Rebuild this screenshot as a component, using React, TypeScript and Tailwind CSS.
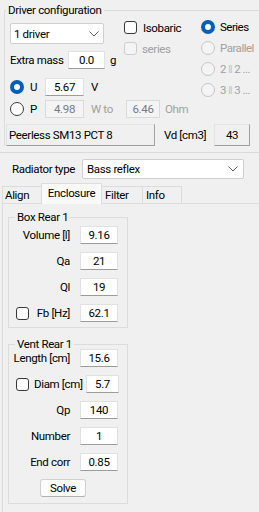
import React from "react"

function Chevron() {
    return (
        <svg width="10" height="6" viewBox="0 0 10 6" className="shrink-0">
            <polyline points="0.5,0.5 5,5 9.5,0.5" fill="none" stroke="#606060" strokeWidth="1" />
        </svg>
    )
}

function Radio({ checked = false, disabled = false }: { checked?: boolean; disabled?: boolean }) {
    if (checked) {
        return (
            <span className="w-[14px] h-[14px] rounded-full bg-[#005fb8] flex items-center justify-center shrink-0">
                <span className="w-[6px] h-[6px] rounded-full bg-white" />
            </span>
        )
    }
    return (
        <span
            className={`w-[14px] h-[14px] rounded-full border shrink-0 ${disabled ? "border-[#c6c6c6] bg-[#f4f4f4]" : "border-[#3a3a3a] bg-white"}`}
        />
    )
}

function Check({ disabled = false }: { disabled?: boolean }) {
    return (
        <span
            className={`w-[13px] h-[13px] rounded-[3px] border shrink-0 ${disabled ? "border-[#cdcdcd] bg-[#f4f4f4]" : "border-[#3a3a3a] bg-white"}`}
        />
    )
}

function Box({ value, w, disabled = false }: { value: string; w: string; disabled?: boolean }) {
    return (
        <div
            className={`${w} h-[18px] flex items-center justify-center border shrink-0 ${disabled
                ? "bg-[#f4f4f4] border-[#dadada] text-[#7a7a7a]"
                : "bg-white border-[#e1e1e1] border-b-[#9c9c9c]"
                }`}
        >
            {value}
        </div>
    )
}

function Row({ label, value, check = false }: { label: string; value: string; check?: boolean }) {
    return (
        <div className="h-[18px] flex items-center">
            <div className="w-[61px] shrink-0 flex items-center">
                {check && (
                    <span className="ml-[7px] flex">
                        <Check />
                    </span>
                )}
                <span className="ml-auto">{label}</span>
            </div>
            <div className="ml-[10px]">
                <Box value={value} w="w-[38px]" />
            </div>
        </div>
    )
}

export default function App() {
    return (
        <div className="w-[259px] h-[512px] overflow-hidden whitespace-nowrap bg-[#f0f0f0] text-[11.5px] tracking-[-0.35px] leading-[16px] text-black flex flex-col font-['Segoe_UI',Roboto,'Liberation_Sans',sans-serif]">
            {/* driver configuration */}
            <div className="pt-[2px] pb-[6px] border-b border-[#dadada]">
                <fieldset className="ml-[4px] border-l border-t border-[#dcdcdc]">
                    <legend className="ml-[1px] px-[2px] leading-[16px]">Driver configuration</legend>
                    <div className="pl-[5px] flex flex-col">
                        <div className="flex items-start">
                            <div className="w-[191px] flex flex-col">
                                <div className="flex items-start">
                                    <div className="w-[114px] flex flex-col">
                                        <div className="mt-[5px] w-[94px] h-[21px] bg-white border border-[#cfcfcf] rounded-[2px] flex items-center pl-[3px] pr-[4px]">
                                            <span className="flex-1">1 driver</span>
                                            <Chevron />
                                        </div>
                                        <div className="mt-[7px] h-[18px] flex items-center">
                                            <span className="w-[58px]">Extra mass</span>
                                            <Box value="0.0" w="w-[37px]" />
                                            <span className="ml-[5px]">g</span>
                                        </div>
                                        <div className="mt-[9px] h-[18px] flex items-center">
                                            <Radio checked />
                                            <span className="w-[21px] pl-[6px]">U</span>
                                            <Box value="5.67" w="w-[39px]" />
                                            <span className="ml-[7px]">V</span>
                                        </div>
                                    </div>
                                    <div className="-mt-[1px] flex flex-col">
                                        <div className="h-[21px] flex items-center">
                                            <Check />
                                            <span className="ml-[6px]">Isobaric</span>
                                        </div>
                                        <div className="h-[21px] flex items-center text-[#a0a0a0]">
                                            <Check disabled />
                                            <span className="ml-[5px]">series</span>
                                        </div>
                                    </div>
                                </div>
                                <div className="mt-[4px] h-[18px] flex items-center">
                                    <Radio />
                                    <span className="w-[21px] pl-[6px]">P</span>
                                    <Box value="4.98" w="w-[39px]" disabled />
                                    <span className="ml-[7px] w-[35px] text-[#a0a0a0]">W to</span>
                                    <Box value="6.46" w="w-[34px]" disabled />
                                    <span className="ml-[5px] text-[#a0a0a0]">Ohm</span>
                                </div>
                            </div>
                            <div className="-mt-[2px] flex flex-col tracking-[-0.5px]">
                                <div className="h-[21px] flex items-center">
                                    <Radio checked />
                                    <span className="ml-[5px]">Series</span>
                                </div>
                                <div className="h-[21px] flex items-center text-[#a0a0a0]">
                                    <Radio disabled />
                                    <span className="ml-[5px]">Parallel</span>
                                </div>
                                <div className="h-[21px] flex items-center text-[#a0a0a0]">
                                    <Radio disabled />
                                    <span className="ml-[5px]">2<span className="text-[#b9c6d8] mx-[2px]">‖</span>2 ...</span>
                                </div>
                                <div className="h-[21px] flex items-center text-[#a0a0a0]">
                                    <Radio disabled />
                                    <span className="ml-[5px]">3<span className="text-[#b9c6d8] mx-[2px]">‖</span>3 ...</span>
                                </div>
                            </div>
                        </div>
                        <div className="mt-[6px] -ml-[4px] h-[22px] flex items-center">
                            <div className="w-[149px] h-[22px] flex items-center pl-[2px] border border-[#e3e3e3] border-r-[#a0a0a0] border-b-[#a0a0a0]">
                                Peerless SM13 PCT 8
                            </div>
                            <span className="ml-[9px] w-[50px]">Vd [cm3]</span>
                            <div className="w-[36px] h-[22px] flex items-center justify-center border border-[#e3e3e3] border-r-[#a0a0a0] border-b-[#a0a0a0]">
                                43
                            </div>
                        </div>
                    </div>
                </fieldset>
            </div>

            {/* radiator type */}
            <div className="mt-[6px] pl-[12px] flex items-center">
                <span className="w-[70px]">Radiator type</span>
                <div className="w-[162px] h-[20px] bg-white border border-[#cfcfcf] rounded-[2px] flex items-center pl-[4px] pr-[5px]">
                    <span className="flex-1">Bass reflex</span>
                    <Chevron />
                </div>
            </div>

            {/* tabs */}
            <div className="mt-[4px] h-[20px] pl-[2px] flex items-end">
                <div className="w-[39px] h-[17px] flex items-center pl-[2px] border-t border-l border-[#dcdcdc]">Align</div>
                <div className="w-[61px] h-[21px] -mb-px relative z-10 flex items-start pt-[1px] justify-center bg-[#f9f9f9] border-t border-l border-r border-[#dcdcdc]">
                    Enclosure
                </div>
                <div className="w-[40px] h-[17px] flex items-center pl-[3px] border-t border-[#dcdcdc]">Filter</div>
                <div className="w-[40px] h-[17px] flex items-center pl-[3px] border-t border-l border-r border-[#dcdcdc]">Info</div>
            </div>

            {/* tab page */}
            <div className="flex-1 ml-[2px] border-l border-t border-[#dcdcdc] pl-[5px] flex flex-col">
                <fieldset className="mt-[5px] w-[120px] border border-[#dcdcdc]">
                    <legend className="ml-[6px] px-[2px] leading-[16px]">Box Rear 1</legend>
                    <div className="pt-[1px] pb-[5px] flex flex-col gap-[8px]">
                        <Row label="Volume [l]" value="9.16" />
                        <Row label="Qa" value="21" />
                        <Row label="Ql" value="19" />
                        <Row label="Fb [Hz]" value="62.1" check />
                    </div>
                </fieldset>

                <fieldset className="mt-[8px] w-[120px] border border-[#dcdcdc]">
                    <legend className="ml-[6px] px-[2px] leading-[16px]">Vent Rear 1</legend>
                    <div className="-mt-[3px] pb-[6px] flex flex-col gap-[8px]">
                        <Row label="Length [cm]" value="15.6" />
                        <div className="h-[18px] flex items-center">
                            <span className="ml-[7px] flex">
                                <Check />
                            </span>
                            <span className="ml-[5px]">Diam [cm]</span>
                            <div className="ml-auto mr-[8px]">
                                <Box value="5.7" w="w-[33px]" />
                            </div>
                        </div>
                        <Row label="Qp" value="140" />
                        <Row label="Number" value="1" />
                        <Row label="End corr" value="0.85" />
                        <div className="h-[18px] flex items-center">
                            <button className="ml-[31px] w-[46px] h-[18px] flex items-center justify-center bg-[#fdfdfd] border border-[#d0d0d0] border-b-[#b0b0b0] rounded-[3px]">
                                Solve
                            </button>
                        </div>
                    </div>
                </fieldset>
            </div>
        </div>
    )
}
